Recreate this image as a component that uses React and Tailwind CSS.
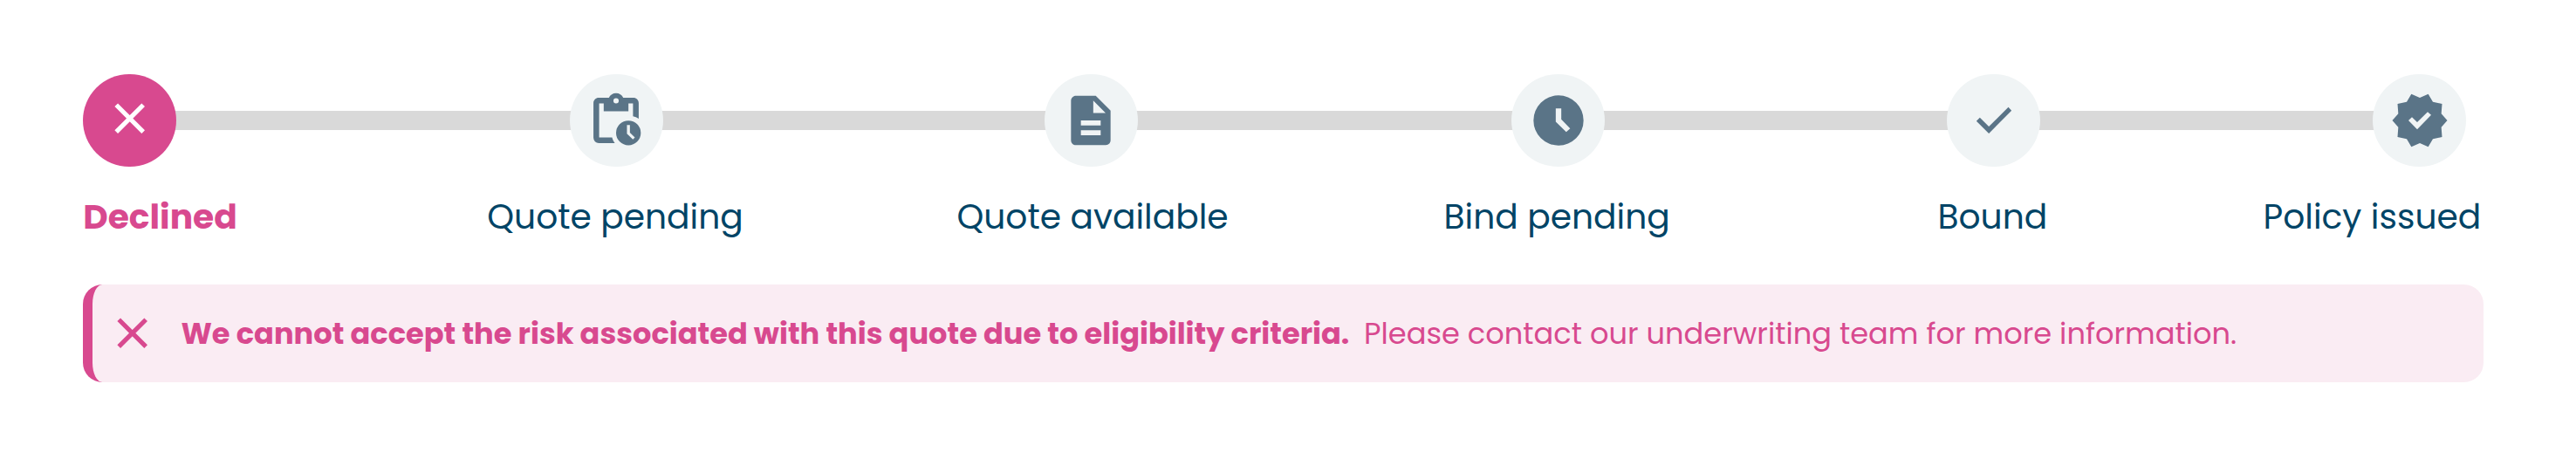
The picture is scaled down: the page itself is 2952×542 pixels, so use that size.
const CloseIcon = ({ className }) => (
  <svg viewBox="-12 -12 24 24" className={className} fill="none" stroke="currentColor" strokeWidth="2.1">
    <path d="M-6.25-6.25 6.25 6.25M6.25-6.25-6.25 6.25" />
  </svg>
);

const PendingIcon = ({ className }) => (
  <svg viewBox="0 0 24 24" className={className} fill="currentColor" fillRule="evenodd">
    <path d="M9.1 2.85C9.6 1.65 10.7.95 12 .95s2.4.7 2.9 1.9H19c1.2 0 2.15.95 2.15 2.15v6.3a6.6 6.6 0 0 0-2.3-.95V5.15H17v3.1H7v-3.1H5.15v13.7h5.25c.2.85.6 1.65 1.1 2.3H5A2.15 2.15 0 0 1 2.85 19V5c0-1.2.95-2.15 2.15-2.15zM12 3a1.08 1.08 0 1 0 0 2.16A1.08 1.08 0 0 0 12 3z" />
    <path d="M17 12.05a5 5 0 1 0 0 10 5 5 0 0 0 0-10zm-.6 1.8h1.2v3.05l2 2-.8.82-2.4-2.37z" />
  </svg>
);

const DocumentIcon = ({ className }) => (
  <svg viewBox="0 0 24 24" className={className} fill="currentColor">
    <path d="M14 2H6c-1.1 0-2 .9-2 2v16c0 1.1.9 2 2 2h12c1.1 0 2-.9 2-2V8l-6-6zm2 16H8v-2h8v2zm0-4H8v-2h8v2zm-3-5V4l5 5h-5z" />
  </svg>
);

const ClockIcon = ({ className }) => (
  <svg viewBox="-102 -102 204 204" className={className} fill="currentColor" fillRule="evenodd">
    <path d="M0-86a86 86 0 1 0 0 172 86 86 0 0 0 0-172zM-9.5-41.5h19v38L40 28 26.5 40-9.5 4.5z" />
  </svg>
);

const CheckIcon = ({ className }) => (
  <svg viewBox="-102 -102 204 204" className={className} fill="currentColor">
    <path d="M-60.5 2-48.5-10-17.5 21 49.5-45.5 60.5-34-17.5 45z" />
  </svg>
);

const VerifiedIcon = ({ className }) => (
  <svg viewBox="-102 -102 204 204" className={className} fill="currentColor" fillRule="evenodd">
    <path d="M94.5 0 74 23.5 76.5 57 45 63.5 29 90.5 0 78-29 90.5-45 63.5-76.5 57-74 23.5-94.5 0-74-23.5-76.5-57-45-63.5-29-90.5 0-78 29-90.5 45-63.5 76.5-57 74-23.5zM-39 0-9 30.5 39-18.5 27-29.5-9 6-27-11.5z" />
  </svg>
);

const idle = "bg-[#f0f4f5] text-[#5a7487]";
const steps = [
  { label: "Declined", Icon: CloseIcon, circle: "bg-[#d8498f] text-white", icon: "size-[59.4px] -mt-[5px]", bar: "w-[467.3px]", col: "w-[463px] font-bold text-[#d8498f]" },
  { label: "Quote pending", Icon: PendingIcon, circle: idle, icon: "size-[68px]", bar: "w-[453.4px]", col: "w-[538.2px] text-[#014466]" },
  { label: "Quote available", Icon: DocumentIcon, circle: idle, icon: "size-[68px]", bar: "w-[444.6px]", col: "w-[558.1px] text-[#014466]" },
  { label: "Bind pending", Icon: ClockIcon, circle: idle, icon: "size-[68px]", bar: "w-[408.5px]", col: "w-[566px] text-[#014466]" },
  { label: "Bound", Icon: CheckIcon, circle: idle, icon: "size-[68px]", bar: "w-[397.3px]", col: "w-[373px] text-[#014466]" },
  { label: "Policy issued", Icon: VerifiedIcon, circle: idle, icon: "size-[68px]", bar: null, col: "w-[250px] text-[#014466]" },
];

export default function App() {
  return (
    <main className="h-[542px] w-[2952px] bg-white pt-[84.5px] pl-[95.2px] font-['Poppins',sans-serif]">
      <div className="flex items-center">
        {steps.map(({ label, Icon, circle, icon, bar }) => (
          <div key={label} className="flex shrink-0 items-center">
            <div className={`relative z-10 flex size-[106.6px] shrink-0 items-center justify-center rounded-full ${circle}`}>
              <Icon className={icon} />
            </div>
            {bar && <div className={`-mx-2 h-[22.4px] shrink-0 bg-[#d9d9d9] ${bar}`} />}
          </div>
        ))}
      </div>
      <div className="mt-[30.2px] flex text-[39.2px] leading-[56px]">
        {steps.map(({ label, col }) => (
          <div key={label} className={`shrink-0 whitespace-nowrap ${col}`}>{label}</div>
        ))}
      </div>
      <div className="mt-[48.5px] flex h-[112px] w-[2750.4px] items-center rounded-[22.4px] border-l-[11px] border-[#d8498f] bg-[#faecf3] pl-[15.5px] text-[33.65px] whitespace-nowrap text-[#d8498f]">
        <CloseIcon className="size-[59.4px] shrink-0" />
        <strong className="ml-[26.4px] pt-[2px] font-bold">We cannot accept the risk associated with this quote due to eligibility criteria.</strong>
        <span className="ml-[16.8px] pt-[2px]">Please contact our underwriting team for more information.</span>
      </div>
    </main>
  );
}
